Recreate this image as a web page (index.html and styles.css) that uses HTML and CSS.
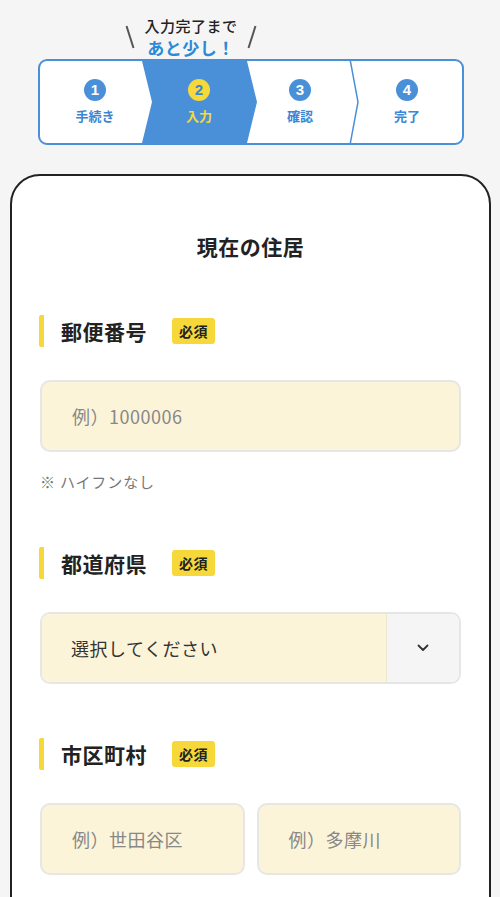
FILE: index.html
```html
<!DOCTYPE html>
<html lang="ja">
<head>
<meta charset="utf-8">
<link rel="stylesheet" href="styles.css">
</head>
<body>
<div class="page">
  <div class="promo">
    <svg class="slash" width="10" height="24" viewBox="0 0 10 24"><line x1="1.5" y1="1" x2="8.5" y2="23" stroke="#555" stroke-width="2"/></svg>
    <div class="promo-text">
      <div class="promo-top">入力完了まで</div>
      <div class="promo-main">あと少し！</div>
    </div>
    <svg class="slash" width="10" height="24" viewBox="0 0 10 24"><line x1="8.5" y1="1" x2="1.5" y2="23" stroke="#555" stroke-width="2"/></svg>
  </div>

  <div class="stepper">
    <svg class="stepper-bg" viewBox="0 0 422 82" preserveAspectRatio="none">
      <polygon points="102,0 207,0 217,41 207,82 102,82 112,41" fill="#4a90d9"/>
      <polyline points="310,-2 318,41 310,84" fill="none" stroke="#4a90d9" stroke-width="1.5"/>
    </svg>
    <div class="step"><span class="num">1</span><span class="step-label">手続き</span></div>
    <div class="step active"><span class="num">2</span><span class="step-label">入力</span></div>
    <div class="step"><span class="num">3</span><span class="step-label">確認</span></div>
    <div class="step"><span class="num">4</span><span class="step-label">完了</span></div>
  </div>

  <div class="card">
    <h1 class="card-title">現在の住居</h1>

    <div class="field">
      <div class="label-row"><span class="label">郵便番号</span><span class="badge">必須</span></div>
      <div class="input"><span class="ph">例）1000006</span></div>
      <div class="note">※ ハイフンなし</div>
    </div>

    <div class="field">
      <div class="label-row"><span class="label">都道府県</span><span class="badge">必須</span></div>
      <div class="select">
        <span class="select-value">選択してください</span>
        <span class="select-btn">
          <svg width="14" height="10" viewBox="0 0 14 10"><polyline points="2.5,2.5 7,7 11.5,2.5" fill="none" stroke="#333" stroke-width="1.8" stroke-linecap="round" stroke-linejoin="round"/></svg>
        </span>
      </div>
    </div>

    <div class="field">
      <div class="label-row"><span class="label">市区町村</span><span class="badge">必須</span></div>
      <div class="input-pair">
        <div class="input"><span class="ph">例）世田谷区</span></div>
        <div class="input"><span class="ph">例）多摩川</span></div>
      </div>
    </div>
  </div>
</div>
</body>
</html>
```

FILE: styles.css
```css
* { box-sizing: border-box; }
html, body { margin: 0; padding: 0; }
body {
  background: #f5f5f5;
  font-family: "Noto Sans CJK JP", "Noto Sans", sans-serif;
  color: #222;
  overflow: hidden;
}
.page { width: 500px; }

.promo {
  display: flex;
  justify-content: center;
  align-items: flex-end;
  gap: 9px;
  padding: 9px 118px 0 0;
  height: 59px;
}
.slash { margin-bottom: 10px; flex: none; }
.promo-text { text-align: center; }
.promo-top {
  font-size: 15px;
  line-height: 22px;
  font-weight: 500;
  color: #222;
  letter-spacing: 0.5px;
}
.promo-main {
  font-size: 17px;
  line-height: 22px;
  font-weight: 700;
  color: #2b8ad8;
  letter-spacing: 0.5px;
}

.stepper {
  position: relative;
  margin: 0 36px 0 38px;
  height: 86px;
  border: 2px solid #4a90d9;
  border-radius: 9px;
  background: #fff;
  overflow: hidden;
  display: grid;
  grid-template-columns: 110px 98px 104px 110px;
}
.stepper-bg {
  position: absolute;
  left: 0; top: 0;
  width: 100%; height: 100%;
}
.step {
  position: relative;
  display: flex;
  flex-direction: column;
  align-items: center;
  padding-top: 18px;
}
.num {
  width: 22px;
  height: 22px;
  border-radius: 50%;
  background: #4a90d9;
  color: #fff;
  font-family: "Liberation Sans", Arial, sans-serif;
  font-weight: 700;
  font-size: 15px;
  line-height: 22px;
  text-align: center;
}
.step-label {
  margin-top: 6px;
  font-size: 13px;
  line-height: 18px;
  font-weight: 700;
  color: #3b86d4;
}
.step.active .num { background: #f7d83b; color: #3b86d4; }
.step.active .step-label { color: #f7d83b; }

.card {
  margin: 29px 9px 0 10px;
  background: #fff;
  border: 2px solid #222;
  border-radius: 30px 30px 0 0;
  padding: 55px 28px 40px 28px;
  min-height: 760px;
}
.card-title {
  margin: 0;
  text-align: center;
  font-size: 21px;
  line-height: 30px;
  font-weight: 700;
  letter-spacing: 0.5px;
  color: #222;
}
.field { margin-top: 54px; }
.label-row {
  display: flex;
  align-items: center;
  height: 32px;
  border-left: 5px solid #f7d83b;
  border-radius: 2px;
  margin-left: -1px;
  padding-left: 17px;
  margin-bottom: 33px;
}
.label {
  font-size: 21px;
  font-weight: 700;
  letter-spacing: 0.5px;
  line-height: 30px;
  color: #222;
}
.badge {
  margin-left: 25px;
  background: #f7d83b;
  border-radius: 3px;
  height: 26px;
  padding: 0 7px;
  font-size: 14px;
  font-weight: 700;
  line-height: 26px;
  letter-spacing: 0.5px;
  color: #222;
}
.input {
  height: 72px;
  background: #fcf4d9;
  border: 2px solid #e6e6e6;
  border-radius: 10px;
  display: flex;
  align-items: center;
  padding-left: 30px;
}
.ph {
  font-size: 18px;
  letter-spacing: 0.5px;
  color: #888;
}
.note {
  margin-top: 19px;
  font-size: 15px;
  line-height: 22px;
  letter-spacing: 0.8px;
  color: #777;
}
.select {
  height: 72px;
  display: flex;
  border: 2px solid #e6e6e6;
  border-radius: 10px;
  overflow: hidden;
}
.select-value {
  flex: 1;
  background: #fcf4d9;
  display: flex;
  align-items: center;
  padding-left: 29px;
  font-size: 18px;
  letter-spacing: 0.5px;
  color: #333;
  border-right: 1px solid #ece6d2;
}
.select-btn {
  width: 72px;
  background: #f5f5f5;
  display: flex;
  align-items: center;
  justify-content: center;
}
.input-pair {
  display: grid;
  grid-template-columns: 1fr 1fr;
  gap: 12px;
}
```
